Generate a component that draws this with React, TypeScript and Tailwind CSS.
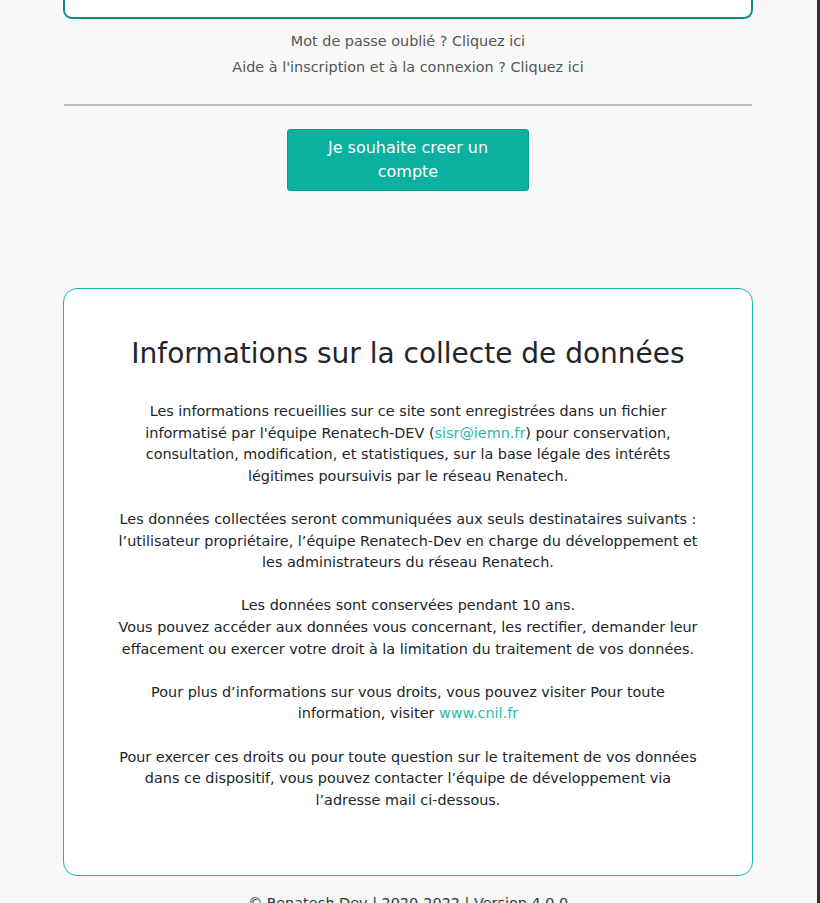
const font = { fontFamily: '"DejaVu Sans", Verdana, sans-serif' };

const Link = ({ href, children }: { href: string; children: React.ReactNode }) => (
  <a href={href} className="text-[#1bbcac] no-underline">
    {children}
  </a>
);

const App = () => {
  return (
    <div className="flex min-h-[903px] bg-[#f8f8f8]" style={font}>
      <div className="w-[817px] flex flex-col items-center">
        <div className="w-[690px] ml-[-1px]">
          {/* Login card (bottom edge only visible) */}
          <div className="h-[19px] bg-white border-x-2 border-b-2 border-[#13897d] rounded-b-[9px]"></div>

          {/* Help links */}
          <div className="mt-[9px] text-center text-[14.4px] leading-[26px] text-[#555]">
            <div>Mot de passe oublié ? Cliquez ici</div>
            <div>Aide à l'inscription et à la connexion ? Cliquez ici</div>
          </div>

          <div className="mt-[24px] h-[2px] bg-[#bdbdbd] mx-[1px]"></div>

          <div className="flex justify-center mt-[23px]">
            <button className="w-[242px] h-[62px] bg-[#0bb0a0] text-white text-[16px] leading-[24px] rounded-[3px] border border-[#0a9e90] px-6">
              Je souhaite creer un compte
            </button>
          </div>

          {/* Data collection info */}
          <div className="mt-[97px] bg-white border border-[#1ab8a8] rounded-[14px] px-[50px] pt-[49px] pb-[64px] text-center">
            <h2 className="text-[28px] leading-[32px] text-[#212529]">
              Informations sur la collecte de données
            </h2>
            <div className="mt-[31px] text-[14.4px] leading-[21.6px] text-[#212529] space-y-[21.6px]">
              <p>
                Les informations recueillies sur ce site sont enregistrées dans un fichier informatisé par
                l'équipe Renatech-DEV (<Link href="mailto:sisr@iemn.fr">sisr@iemn.fr</Link>) pour conservation,
                consultation, modification, et statistiques, sur la base légale des intérêts légitimes
                poursuivis par le réseau Renatech.
              </p>
              <p>
                Les données collectées seront communiquées aux seuls destinataires suivants :
                l’utilisateur propriétaire, l’équipe Renatech-Dev en charge du développement et les
                administrateurs du réseau Renatech.
              </p>
              <p>
                Les données sont conservées pendant 10 ans.
                <br />
                Vous pouvez accéder aux données vous concernant, les rectifier, demander leur effacement ou
                exercer votre droit à la limitation du traitement de vos données.
              </p>
              <p>
                Pour plus d’informations sur vous droits, vous pouvez visiter Pour toute information,
                visiter <Link href="#">www.cnil.fr</Link>
              </p>
              <p>
                Pour exercer ces droits ou pour toute question sur le traitement de vos données dans ce
                dispositif, vous pouvez contacter l’équipe de développement via l’adresse mail ci-dessous.
              </p>
            </div>
          </div>

          <footer className="mt-[17px] text-center text-[14.4px] leading-[21.6px] text-[#333]">
            © Renatech Dev | 2020-2022 | Version 4.0.0
          </footer>
        </div>
      </div>
      <div className="w-[3px] bg-[#2e2e2e]"></div>
    </div>
  );
};

export default App;
